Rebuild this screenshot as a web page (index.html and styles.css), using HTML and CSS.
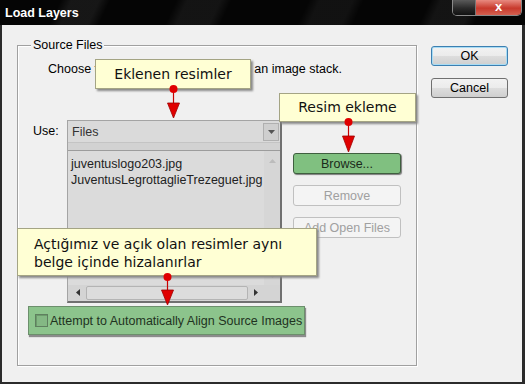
FILE: index.html
```html
<!DOCTYPE html>
<html lang="en">
<head>
    <meta charset="UTF-8">
    <meta name="viewport" content="width=device-width, initial-scale=1.0">
    <title>Load Layers</title>
    <link rel="stylesheet" href="styles.css">
</head>
<body>
    <div class="window">
        <!-- Title bar -->
        <div class="titlebar">
            <span class="title">Load Layers</span>
            <div class="caption-buttons">
                <span class="cap-btn cap-min"></span>
                <span class="cap-btn cap-close">x</span>
            </div>
        </div>

        <!-- Dialog body -->
        <div class="client">
            <div class="group">
                <span class="legend">Source Files</span>
                <p class="intro">Choose two or more files to load into an image stack.</p>

                <div class="use-row">
                    <span class="use-label">Use:</span>
                    <div class="file-panel">
                        <div class="combo">
                            <span class="combo-text">Files</span>
                            <span class="combo-arrow">
                                <svg width="7" height="4" viewBox="0 0 7 4"><polygon points="0,0 7,0 3.5,4" fill="#555"/></svg>
                            </span>
                        </div>
                        <div class="list">
                            <div class="list-body">
                                <div class="items">
                                    <div>juventuslogo203.jpg</div>
                                    <div>JuventusLegrottaglieTrezeguet.jpg</div>
                                </div>
                                <div class="vscroll">
                                    <svg width="7" height="4" viewBox="0 0 7 4"><polygon points="0,4 7,4 3.5,0" fill="#bcbcbc"/></svg>
                                    <svg width="7" height="4" viewBox="0 0 7 4"><polygon points="0,0 7,0 3.5,4" fill="#bcbcbc"/></svg>
                                </div>
                            </div>
                            <div class="hscroll">
                                <svg width="4" height="7" viewBox="0 0 4 7"><polygon points="4,0 4,7 0,3.5" fill="#333"/></svg>
                                <span class="thumb"></span>
                                <svg width="4" height="7" viewBox="0 0 4 7"><polygon points="0,0 0,7 4,3.5" fill="#333"/></svg>
                            </div>
                        </div>
                    </div>
                    <div class="file-buttons">
                        <button class="btn btn-browse">Browse...</button>
                        <button class="btn" disabled>Remove</button>
                        <button class="btn" disabled>Add Open Files</button>
                    </div>
                </div>

                <label class="align-row">
                    <span class="checkbox"></span>
                    Attempt to Automatically Align Source Images
                </label>
            </div>

            <div class="dialog-buttons">
                <button class="btn btn-default">OK</button>
                <button class="btn">Cancel</button>
            </div>
        </div>

        <!-- Callouts drawn over the dialog -->
        <div class="callout callout-files">Eklenen resimler</div>
        <div class="callout callout-browse">Resim ekleme</div>
        <div class="callout callout-align">Açtığımız ve açık olan resimler aynı<br>belge içinde hizalanırlar</div>

        <svg class="marker marker-files" width="13" height="35" viewBox="0 0 13 35">
            <line x1="6.5" y1="8" x2="6.5" y2="20" stroke="#c80000" stroke-width="1.2"/>
            <circle cx="6.5" cy="5" r="4" fill="#e00000"/>
            <polygon points="0.5,19 12.5,19 6.5,34" fill="#e00000" stroke="#a00000" stroke-width="0.8"/>
        </svg>
        <svg class="marker marker-browse" width="13" height="36" viewBox="0 0 13 36">
            <line x1="6.5" y1="8" x2="6.5" y2="20" stroke="#c80000" stroke-width="1.2"/>
            <circle cx="6.5" cy="5" r="4" fill="#e00000"/>
            <polygon points="0.5,19 12.5,19 6.5,35" fill="#e00000" stroke="#a00000" stroke-width="0.8"/>
        </svg>
        <svg class="marker marker-align" width="13" height="34" viewBox="0 0 13 34">
            <line x1="6.5" y1="8" x2="6.5" y2="19" stroke="#c80000" stroke-width="1.2"/>
            <circle cx="6.5" cy="5" r="4" fill="#e00000"/>
            <polygon points="0.5,18 12.5,18 6.5,33" fill="#e00000" stroke="#a00000" stroke-width="0.8"/>
        </svg>
    </div>
</body>
</html>
```

FILE: styles.css
```css
/* Page reset */
body {
    margin: 0;
    padding: 0;
    background: #000;
    font-family: 'Liberation Sans', Arial, sans-serif;
    font-size: 12.5px;
    color: #000;
}

/* Whole dialog window */
.window {
    position: relative;
    width: 525px;
    height: 384px;
    display: flex;
    flex-direction: column;
    overflow: hidden;
}

/* Black Aero-style title bar */
.titlebar {
    height: 25px;
    flex: none;
    display: flex;
    align-items: flex-start;
    background:
        linear-gradient(115deg, transparent 0 55px, rgba(255,255,255,0.07) 65px 90px, transparent 100px 160px,
            rgba(255,255,255,0.06) 170px 200px, transparent 210px 280px, rgba(255,255,255,0.05) 290px 320px,
            transparent 330px 390px, rgba(255,255,255,0.06) 400px 430px, transparent 440px),
        #050505;
}

.title {
    color: #fff;
    font-weight: bold;
    font-size: 12.5px;
    padding: 6px 0 0 5px;
}

.caption-buttons {
    margin-left: auto;
    margin-right: 3px;
    display: flex;
    border: 1px solid #8a8a8a;
    border-top: none;
    border-radius: 0 0 5px 5px;
    overflow: hidden;
}

.cap-btn {
    height: 15px;
}

.cap-min {
    width: 22px;
    background: linear-gradient(#5a5a5a, #2a2a2a 55%, #111);
    border-right: 1px solid #777;
}

.cap-close {
    width: 45px;
    background: linear-gradient(#e88a80, #c8392c 55%, #d46050);
    color: #fff;
    font-weight: bold;
    font-size: 13px;
    line-height: 13px;
    text-align: center;
}

/* Client area of the dialog */
.client {
    flex: 1;
    display: flex;
    gap: 14px;
    padding: 20px 0 0 15px;
    background: #f0f0f0;
    border: 2px solid #2b2b2b;
    border-top: none;
    border-right-width: 3px;
}

/* Source Files group box */
.group {
    width: 398px;
    height: 319px;
    border: 1px solid #a0a0a0;
    box-shadow: inset 1px 1px 0 #fff, 1px 1px 0 #fff;
    display: flex;
    flex-direction: column;
}

.legend {
    align-self: flex-start;
    margin: -8px 0 0 13px;
    padding: 0 2px;
    background: #f0f0f0;
    line-height: 14px;
}

.intro {
    margin: 10px 0 0 30px;
    line-height: 14px;
}

/* Use: row with the file list and buttons */
.use-row {
    display: flex;
    margin-top: 44px;
}

.use-label {
    width: 34px;
    padding: 4px 0 0 15px;
}

.file-panel {
    width: 212px;
    height: 180px;
    display: flex;
    flex-direction: column;
    background: #d2d2d2;
    border-left: 1px solid #a4a4a4;
    border-top: 1px solid #a4a4a4;
    border-right: 2px solid #707070;
    border-bottom: 2px solid #707070;
}

.combo {
    height: 21px;
    display: flex;
    align-items: center;
    background: #dadada;
    border-bottom: 1px solid #c4c4c4;
}

.combo-text {
    padding-left: 4px;
    flex: 1;
    color: #333;
}

.combo-arrow {
    width: 14px;
    height: 16px;
    margin-right: 1px;
    display: flex;
    align-items: center;
    justify-content: center;
    background: #cfcfcf;
    border: 1px solid #b0b0b0;
}

.list {
    flex: 1;
    margin-top: 7px;
    display: flex;
    flex-direction: column;
    background: #dbdbdb;
    border-top: 1px solid #9c9c9c;
}

.list-body {
    flex: 1;
    display: flex;
}

.items {
    flex: 1;
    padding: 5px 0 0 3px;
    line-height: 16px;
    color: #222;
    white-space: nowrap;
    overflow: hidden;
}

.vscroll {
    width: 16px;
    display: flex;
    flex-direction: column;
    align-items: center;
    justify-content: space-between;
    padding: 8px 0 7px;
    background: #d6d6d6;
}

.hscroll {
    height: 15px;
    display: flex;
    align-items: center;
    gap: 6px;
    padding: 0 22px 1px 8px;
    background: #d4d4d4;
}

.thumb {
    flex: 1;
    height: 12px;
    background: #dcdcdc;
    border: 1px solid #b4b4b4;
    border-radius: 2px;
}

/* Browse / Remove / Add Open Files */
.file-buttons {
    display: flex;
    flex-direction: column;
    gap: 11px;
    margin: 33px 0 0 11px;
}

.btn {
    font-family: 'Liberation Sans', Arial, sans-serif;
    font-size: 12.5px;
    width: 108px;
    height: 21px;
    padding: 0;
    border: 1px solid #707070;
    border-radius: 3px;
    background: linear-gradient(#f2f2f2, #ebebeb 50%, #dddddd 51%, #cfcfcf);
    color: #000;
}

.btn:disabled {
    border-color: #c0c0c0;
    background: #f4f4f4;
    color: #a0a0a0;
}

.btn-browse {
    background: #80c080;
    border-color: #3f5f3f;
    box-shadow: 1px 1px 1px #7a7a7a;
    color: #1a2a1a;
}

/* Highlighted checkbox row */
.align-row {
    align-self: flex-start;
    margin: 3px 0 0 10px;
    width: 277px;
    height: 29px;
    display: flex;
    align-items: center;
    gap: 2px;
    padding-left: 6px;
    box-sizing: border-box;
    background: #8cc48c;
    border: 1px solid #6c8f6c;
    box-shadow: 1px 2px 1px #8c8c8c;
    color: #1f331f;
    white-space: nowrap;
}

.checkbox {
    width: 11px;
    height: 11px;
    border: 1px solid #5f7f5f;
    background: #84b884;
    box-shadow: inset 1px 1px 0 #6b9b6b;
}

/* OK / Cancel */
.dialog-buttons {
    display: flex;
    flex-direction: column;
    gap: 12px;
    margin-top: 1px;
}

.dialog-buttons .btn {
    width: 77px;
    height: 20px;
}

.btn-default {
    border-color: #3c7fb1;
    box-shadow: inset 0 0 0 1px #a8dcf4;
}

/* Yellow callouts on top of the dialog */
.callout {
    position: absolute;
    background: #ffffd4;
    border: 1px solid #a4a484;
    box-shadow: 2px 2px 2px #8a8a8a;
    font-family: 'DejaVu Sans', Verdana, sans-serif;
    font-size: 14px;
    color: #111;
    box-sizing: border-box;
}

.callout-files {
    left: 95px;
    top: 59px;
    width: 156px;
    height: 30px;
    line-height: 28px;
    text-align: center;
}

.callout-browse {
    left: 279px;
    top: 93px;
    width: 137px;
    height: 29px;
    line-height: 27px;
    text-align: center;
}

.callout-align {
    left: 17px;
    top: 228px;
    width: 300px;
    height: 48px;
    padding: 6px 0 0 16px;
    line-height: 18px;
}

.marker {
    position: absolute;
}

.marker-files {
    left: 167px;
    top: 84px;
}

.marker-browse {
    left: 342px;
    top: 117px;
}

.marker-align {
    left: 161px;
    top: 272px;
}
```
